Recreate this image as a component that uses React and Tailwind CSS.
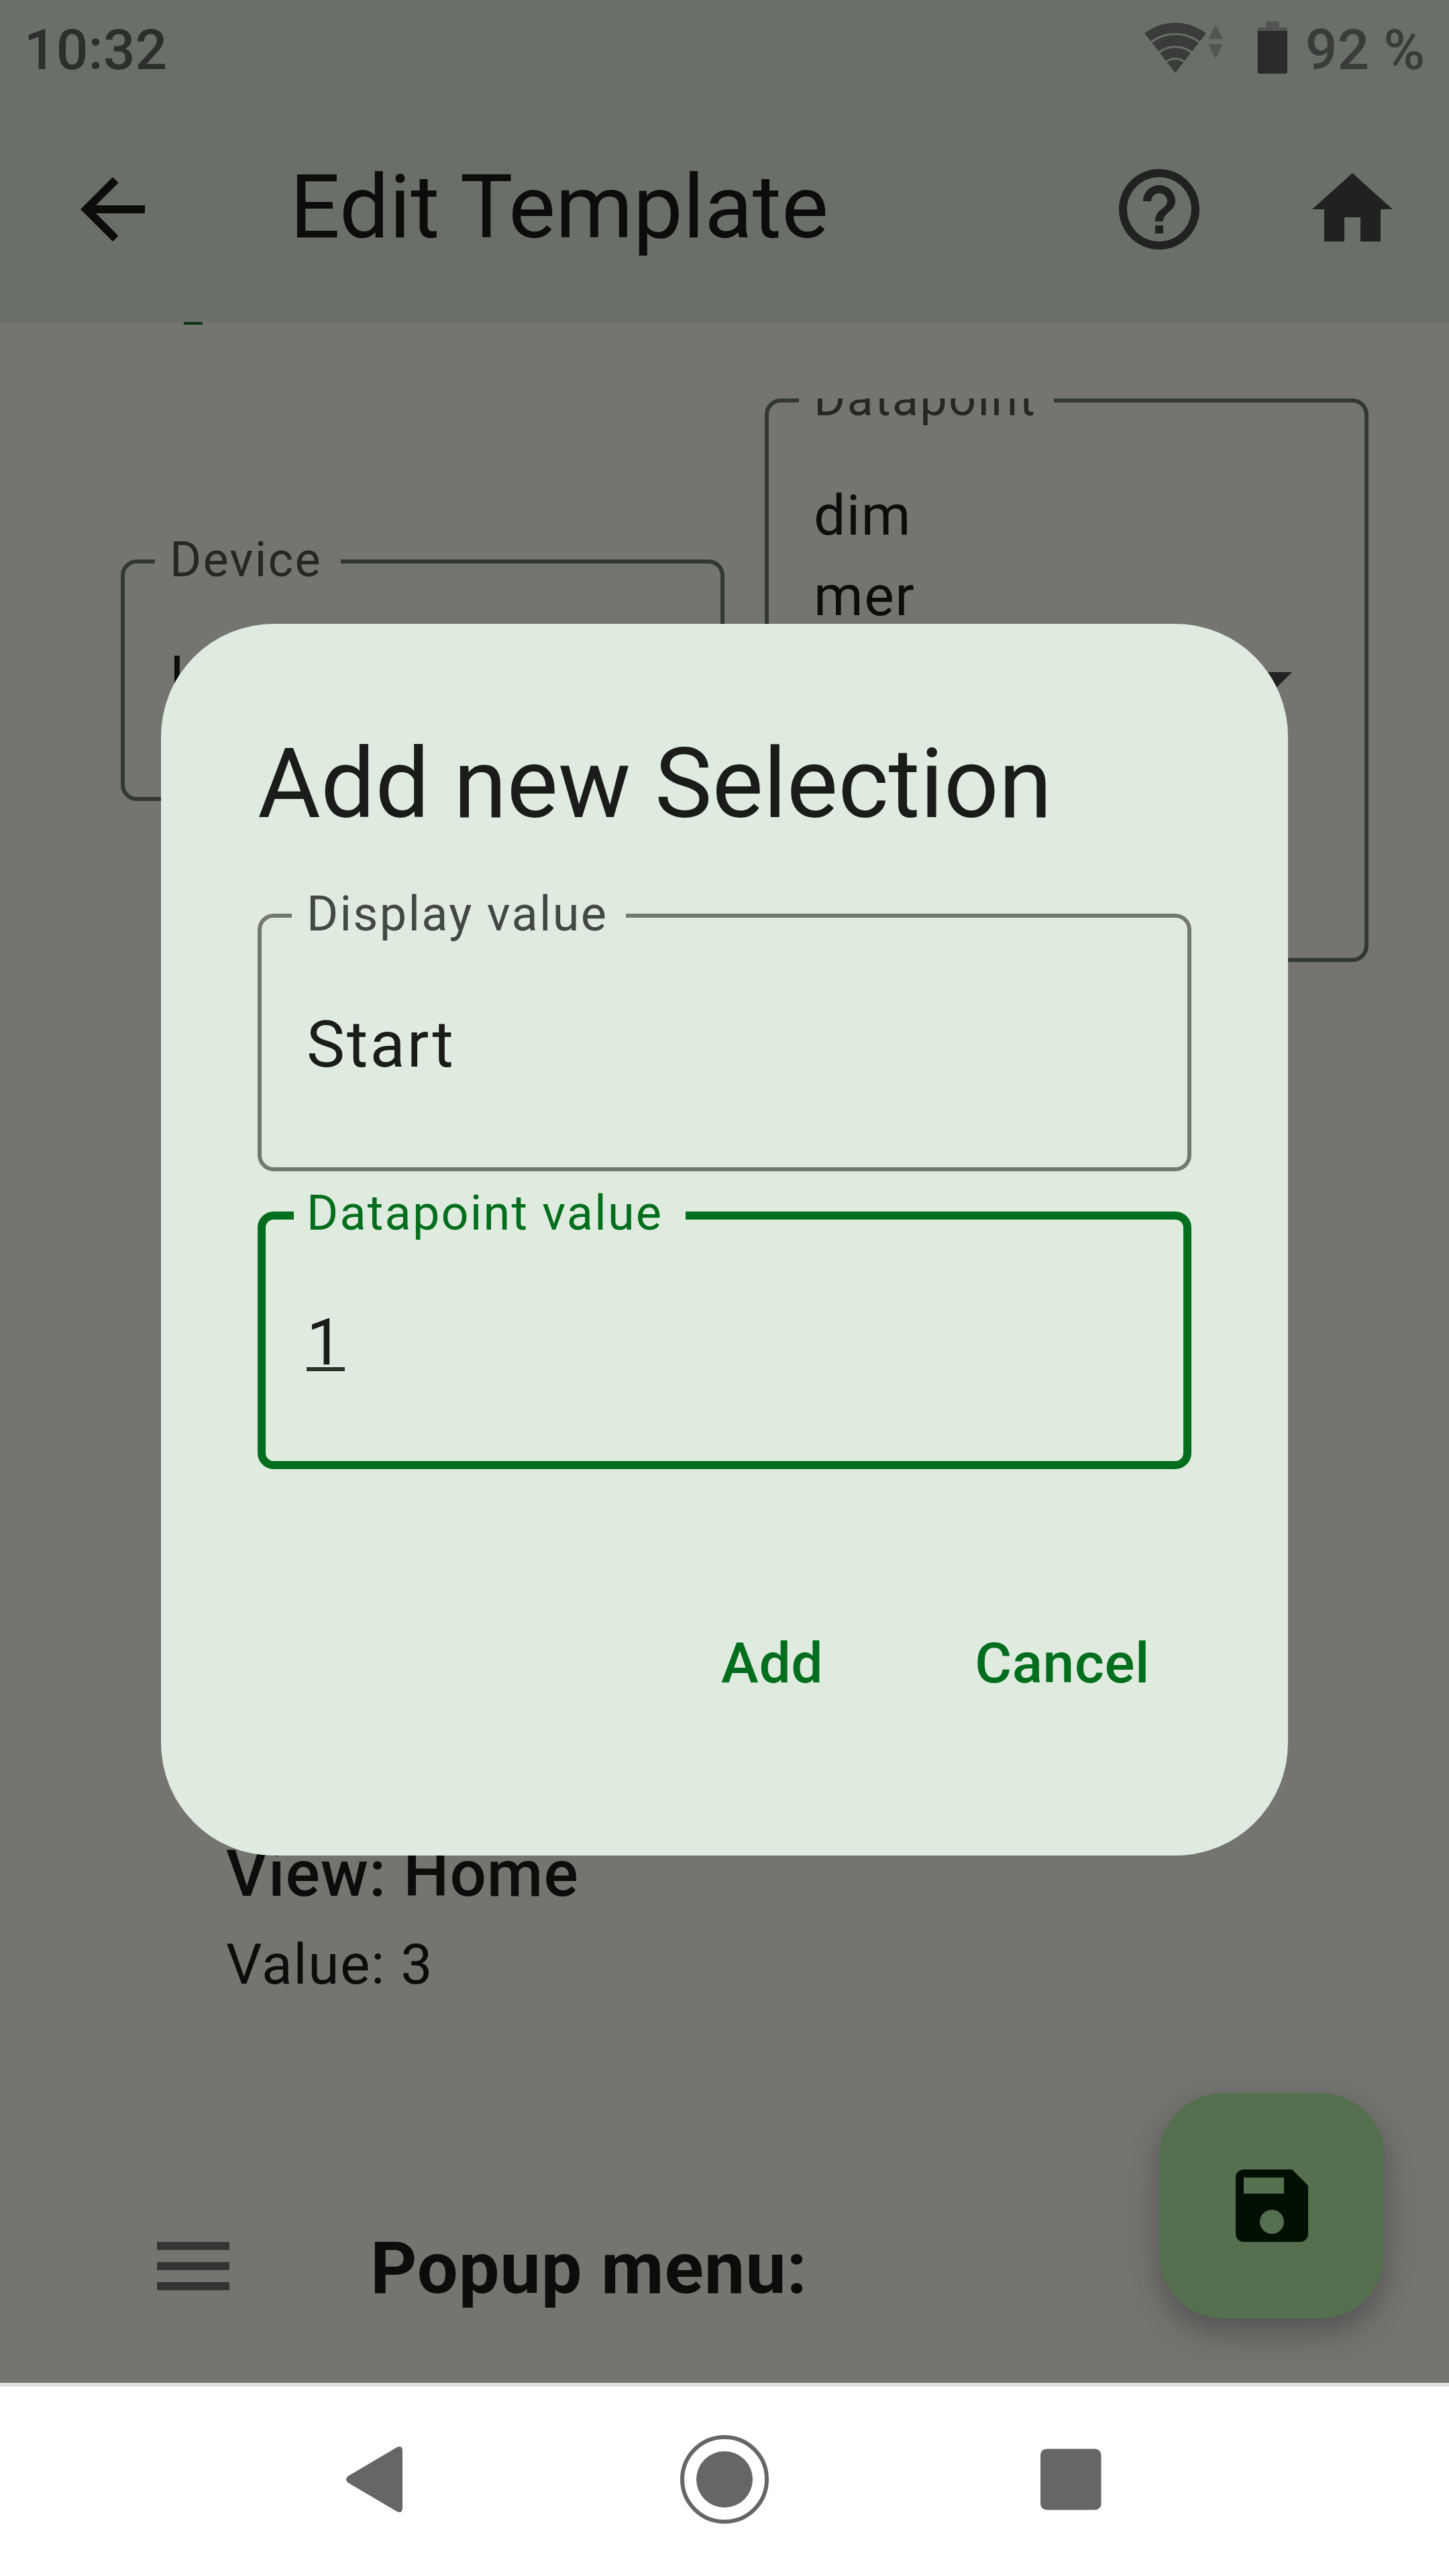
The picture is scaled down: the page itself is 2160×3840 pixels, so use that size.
import React from "react";

function Icon({ d, className }) {
  return (
    <svg viewBox="0 0 24 24" fill="currentColor" className={"block size-[144px] shrink-0 " + (className || "")}>
      <path d={d} />
    </svg>
  );
}

const ICONS = {
  back: "M20 11H7.83l5.59-5.59L12 4l-8 8 8 8 1.41-1.41L7.83 13H20v-2z",
  help: "M11 18h2v-2h-2v2zm1-16C6.48 2 2 6.48 2 12s4.48 10 10 10 10-4.48 10-10S17.52 2 12 2zm0 18c-4.41 0-8-3.59-8-8s3.59-8 8-8 8 3.59 8 8-3.59 8-8 8zm0-14c-2.21 0-4 1.79-4 4h2c0-1.1.9-2 2-2s2 .9 2 2c0 2-3 1.75-3 5h2c0-2.25 3-2.5 3-5 0-2.21-1.79-4-4-4z",
  home: "M10 20v-6h4v6h5v-8h3L12 3 2 12h3v8z",
  menu: "M3 18h18v-2H3v2zm0-5h18v-2H3v2zm0-7v2h18V6H3z",
  drop: "M7 10l5 5 5-5z",
  save: "M17 3H5c-1.11 0-2 .9-2 2v14c0 1.1.89 2 2 2h14c1.1 0 2-.9 2-2V7l-4-4zm-5 16c-1.66 0-3-1.34-3-3s1.34-3 3-3 3 1.34 3 3-1.34 3-3 3zm3-10H5V5h10v4z",
};

function StatusBar() {
  return (
    <div className="flex h-[144px] items-start justify-between pl-[36px] pr-[36px] pt-[15px] text-[84px] leading-[120px] font-medium">
      <span className="text-[#2d2f2c]">10:32</span>
      <div className="flex items-start text-[#393c38]">
        <svg viewBox="0 0 118 80" className="mt-[16px] block h-[80px] w-[118px]">
          <path d="M46 77.7 L0.3 18.7 A74.6 74.6 0 0 1 91.7 18.7 Z" fill="#393c38" />
          <g fill="none" stroke="#6a6f69" strokeWidth="3">
            <circle cx="46" cy="77.7" r="58" />
            <circle cx="46" cy="77.7" r="39" />
            <circle cx="46" cy="77.7" r="21.3" />
          </g>
          <path d="M106 5.7 L116.7 27.3 H95.3 Z M106 57 L116.7 34.7 H95.3 Z" fill="#525550" />
        </svg>
        <svg viewBox="0 0 46 80" className="ml-[50px] mt-[16px] block h-[80px] w-[46px]">
          <path d="M13 1h19.600v9h9.400q3 0 3 3v4H0.700v-4q0-3 3-3h9.300z" fill="#50534f" />
          <path d="M0.700 15H45v60.700q0 3-3 3H3.700q-3 0-3-3z" fill="#2a2c29" />
        </svg>
        <span className="ml-[26px]">92 %</span>
      </div>
    </div>
  );
}

function TopBar() {
  return (
    <header className="h-[480px] bg-[#6a6f69]">
      <StatusBar />
      <div className="flex items-start pl-[96px] pr-[72px] pt-[96px]">
        <Icon d={ICONS.back} className="text-[#0c0d0b]" />
        <h1 className="ml-[192px] flex-1 whitespace-nowrap text-[132px] leading-[138px] text-[#0c0d0b]">Edit Template</h1>
        <Icon d={ICONS.help} className="text-[#1f221e]" />
        <Icon d={ICONS.home} className="ml-[144px] text-[#1f221e]" />
      </div>
    </header>
  );
}

function SelectField({ label, legendClass, fieldClass, children }) {
  return (
    <div className={"w-[900px] " + fieldClass}>
      <fieldset className="-mt-[45px] h-[calc(100%+45px)] rounded-[24px] border-[6px] border-[#323832] pl-[45px]">
        <legend className={"h-[96px] whitespace-nowrap pl-[22px] text-[72px] leading-[91px] tracking-[2.3px] text-[#242723] " + legendClass}>
          {label}
        </legend>
        <div className="flex h-[calc(100%-6px)] justify-between pl-[22px] pt-[64px] text-[84px] leading-[120px] tracking-[1.5px] text-[#0c0d0b]">
          {children}
        </div>
      </fieldset>
    </div>
  );
}

function Content() {
  return (
    <main className="flex h-[3072px] flex-col bg-[#747570]">
      <div className="ml-[274px] h-[4px] w-[28px] bg-[#0a3814]" />
      <div className="mt-[110px] flex h-[840px] items-center gap-[60px] pl-[180px]">
        <SelectField label="Device" legendClass="w-[277px]" fieldClass="h-[360px]">
          <span>L</span>
        </SelectField>
        <SelectField label="Datapoint" legendClass="w-[380px]" fieldClass="h-[840px] overflow-hidden">
          <span>
            dim
            <br />
            mer
          </span>
          <Icon d={ICONS.drop} className="mr-[66px] mt-[233px] text-[#1f221e]" />
        </SelectField>
      </div>
      <div className="mt-[1287px] pl-[337px] text-[#0c0d0b]">
        <div className="text-[96px] font-medium leading-[144px] tracking-[1px]">View: Home</div>
        <div className="mt-[4px] text-[84px] leading-[120px] tracking-[1.5px]">Value: 3</div>
      </div>
      <div className="mt-[317px] flex items-start pl-[216px]">
        <Icon d={ICONS.menu} className="text-[#333532]" />
        <div className="ml-[192px] text-[108px] font-bold leading-[150px] tracking-[0.9px] text-[#0c0d0b]">Popup menu:</div>
      </div>
    </main>
  );
}

function Dialog() {
  return (
    <section className="absolute left-[240px] top-[930px] flex h-[1836px] w-[1680px] flex-col rounded-[168px] bg-[#e0ebdf] px-[144px] pt-[143px] text-[#1a1c19]">
      <h2 className="whitespace-nowrap text-[144px] leading-[192px]">Add new Selection</h2>
      <fieldset className="mt-[52px] h-[429px] rounded-[24px] border-[6px] border-[#72796f] pl-[45px]">
        <legend className="h-[96px] w-[498px] whitespace-nowrap pl-[22px] text-[72px] leading-[91px] tracking-[2.3px] text-[#424940]">
          Display value
        </legend>
        <div className="ml-[22px] mt-[72px] text-[96px] leading-[144px] tracking-[3px]">Start</div>
      </fieldset>
      <fieldset className="mt-[18px] h-[426px] rounded-[24px] border-[12px] border-[#006e1c] pl-[42px]">
        <legend className="h-[96px] w-[584px] whitespace-nowrap pl-[19px] text-[72px] leading-[90px] tracking-[2.2px] text-[#006e1c]">
          Datapoint value
        </legend>
        <div className="ml-[19px] mt-[69px] text-[96px] leading-[144px] tracking-[3px]">
          <span className="underline decoration-[#2d312c] decoration-[6px] underline-offset-[4px]">1</span>
        </div>
      </fieldset>
      <div className="mt-[230px] flex justify-end gap-[226px] pr-[62px] text-[84px] font-medium leading-[120px] tracking-[0.6px] text-[#006e1c]">
        <button>Add</button>
        <button>Cancel</button>
      </div>
    </section>
  );
}

function NavBar() {
  return (
    <nav className="h-[288px] border-t-[6px] border-[#e0e0e0] bg-white">
      <svg viewBox="0 0 2160 282" className="block h-[282px] w-[2160px]" fill="#666">
        <path d="M519 133 L591 90.500 Q600 86 600 96 V180 Q600 190 591 185.500 L519 143 Q513 138 519 133 Z" />
        <circle cx="1080" cy="138" r="63" fill="none" stroke="#666" strokeWidth="6" />
        <circle cx="1080" cy="138" r="42" />
        <rect x="1551" y="92.500" width="90.500" height="91" rx="9" />
      </svg>
    </nav>
  );
}

export default function App() {
  return (
    <div className="relative h-[3840px] w-[2160px] overflow-hidden bg-white font-[Roboto,sans-serif]">
      <TopBar />
      <Content />
      <NavBar />
      <button className="absolute left-[1728px] top-[3120px] flex size-[336px] items-center justify-center rounded-[96px] bg-[#54704f] text-[#000f02] shadow-[0_24px_48px_rgba(50,46,50,0.4),0_4px_30px_rgba(80,70,80,0.15)]">
        <Icon d={ICONS.save} />
      </button>
      <Dialog />
    </div>
  );
}
